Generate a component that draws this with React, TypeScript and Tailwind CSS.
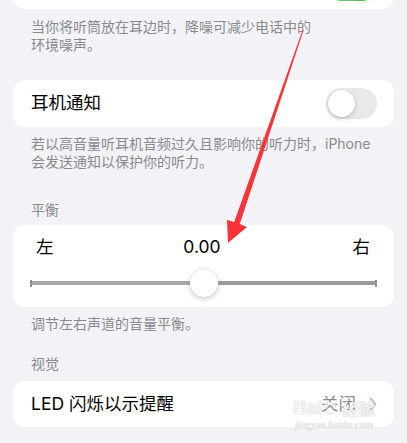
import React from "react";

const font = {
  fontFamily: 'Inter, "Noto Sans CJK SC", sans-serif',
};

function Toggle({ on }: { on?: boolean }) {
  return (
    <div
      className={`flex h-[31px] w-[51px] items-center rounded-full p-[2px] ${
        on ? "justify-end bg-[#65c466]" : "justify-start bg-[#e9e9eb]"
      }`}
    >
      <div className="h-[27px] w-[27px] rounded-full bg-white shadow-[0_2px_5px_rgba(0,0,0,0.18),0_0_1px_rgba(0,0,0,0.15)]" />
    </div>
  );
}

function Footnote({ children, className = "" }: { children: React.ReactNode; className?: string }) {
  return (
    <p className={`px-[18px] text-[14px] leading-[18px] text-[#8a8a8e] ${className}`}>
      {children}
    </p>
  );
}

function Paw() {
  return (
    <svg width="14" height="14" viewBox="0 0 14 14" fill="white" stroke="#c8c8c8" strokeWidth="0.6">
      <ellipse cx="3" cy="5" rx="1.6" ry="2" />
      <ellipse cx="5.6" cy="2.6" rx="1.6" ry="2" />
      <ellipse cx="8.6" cy="2.6" rx="1.6" ry="2" />
      <ellipse cx="11.2" cy="5" rx="1.6" ry="2" />
      <path d="M7 6.5 C4.5 6.5 3 9.5 3.4 11.5 C3.8 13 6 12.5 7 12.5 C8 12.5 10.2 13 10.6 11.5 C11 9.5 9.5 6.5 7 6.5 Z" />
    </svg>
  );
}

export default function App() {
  return (
    <main
      className="relative h-[443px] w-full overflow-hidden bg-[#f2f2f7] px-[13px]"
      style={font}
    >
      {/* top card, scrolled off */}
      <section className="-mt-[38px] flex h-[47px] items-center justify-end rounded-[12px] bg-white pr-[17px]">
        <Toggle on />
      </section>

      <Footnote className="mt-[9px]">
        当你将听筒放在耳边时，降噪可减少电话中的
        <br />
        环境噪声。
      </Footnote>

      {/* 耳机通知 */}
      <section className="mt-[26px] flex h-[47px] items-center justify-between rounded-[12px] bg-white pl-[18px] pr-[17px]">
        <span className="text-[17.5px] text-black">耳机通知</span>
        <Toggle />
      </section>

      <Footnote className="mt-[8px]">
        若以高音量听耳机音频过久且影响你的听力时，iPhone
        <br />
        会发送通知以保护你的听力。
      </Footnote>

      {/* 平衡 */}
      <Footnote className="mt-[30px]">平衡</Footnote>
      <section className="mt-[6px] rounded-[12px] bg-white pt-[11px] pb-[10px]">
        <div className="flex h-[22px] items-center justify-between pl-[23px] pr-[24px] text-[17.5px] leading-[22px] text-black">
          <span>左</span>
          <span className="-ml-[2px]">0.00</span>
          <span>右</span>
        </div>
        <div className="mt-[11px] flex h-[28px] items-center px-[17px]">
          <div className="h-[7px] w-[2px] bg-[#8e8e8e]" />
          <div className="h-[4px] flex-1 bg-[#a9a9a9]" />
          <div className="h-[28px] w-[28px] shrink-0 rounded-full bg-white shadow-[0_2px_6px_rgba(0,0,0,0.2),0_0_1px_rgba(0,0,0,0.2)]" />
          <div className="h-[4px] flex-1 bg-[#9a9a9a]" />
          <div className="h-[7px] w-[2px] bg-[#8e8e8e]" />
        </div>
      </section>

      <Footnote className="mt-[8px]">调节左右声道的音量平衡。</Footnote>

      {/* 视觉 */}
      <Footnote className="mt-[22px]">视觉</Footnote>
      <section className="mt-[8px] flex h-[46px] items-center justify-between rounded-[12px] bg-white pl-[18px] pr-[17px]">
        <span className="text-[17.5px] text-black">LED 闪烁以示提醒</span>
        <div className="flex items-center gap-[13px]">
          <span className="text-[17.5px] text-[#8a8a8e]">关闭</span>
          <svg width="8" height="14" viewBox="0 0 8 14" fill="none">
            <path d="M1.5 1.5 L6.5 7 L1.5 12.5" stroke="#c4c4c7" strokeWidth="2" strokeLinecap="round" strokeLinejoin="round" />
          </svg>
        </div>
      </section>

      {/* baidu watermark */}
      <div className="pointer-events-none absolute left-[290px] top-[399px] flex w-[88px] flex-col items-center text-white/90 [text-shadow:0_0_1px_rgba(0,0,0,0.4)]">
        <div className="flex items-center text-[19px] font-bold leading-[18px]">
          <span style={{ fontFamily: '"Liberation Sans", sans-serif' }}>Bai</span>
          <Paw />
          <span className="ml-[6px] text-[16px]" style={{ fontFamily: '"Noto Sans CJK SC", sans-serif' }}>
            经验
          </span>
        </div>
        <span className="mt-[2px] text-[10.5px] leading-[12px]" style={{ fontFamily: '"Liberation Serif", serif' }}>
          jingyan.baidu.com
        </span>
      </div>

      {/* red annotation arrow */}
      <svg
        className="pointer-events-none absolute left-0 top-0"
        width="407"
        height="443"
        viewBox="0 0 407 443"
      >
        <polygon
          points="303.6,30 239.8,224 247,227 228,243 227,220 234.2,222 302.6,30"
          fill="#f5353a"
        />
      </svg>
    </main>
  );
}
